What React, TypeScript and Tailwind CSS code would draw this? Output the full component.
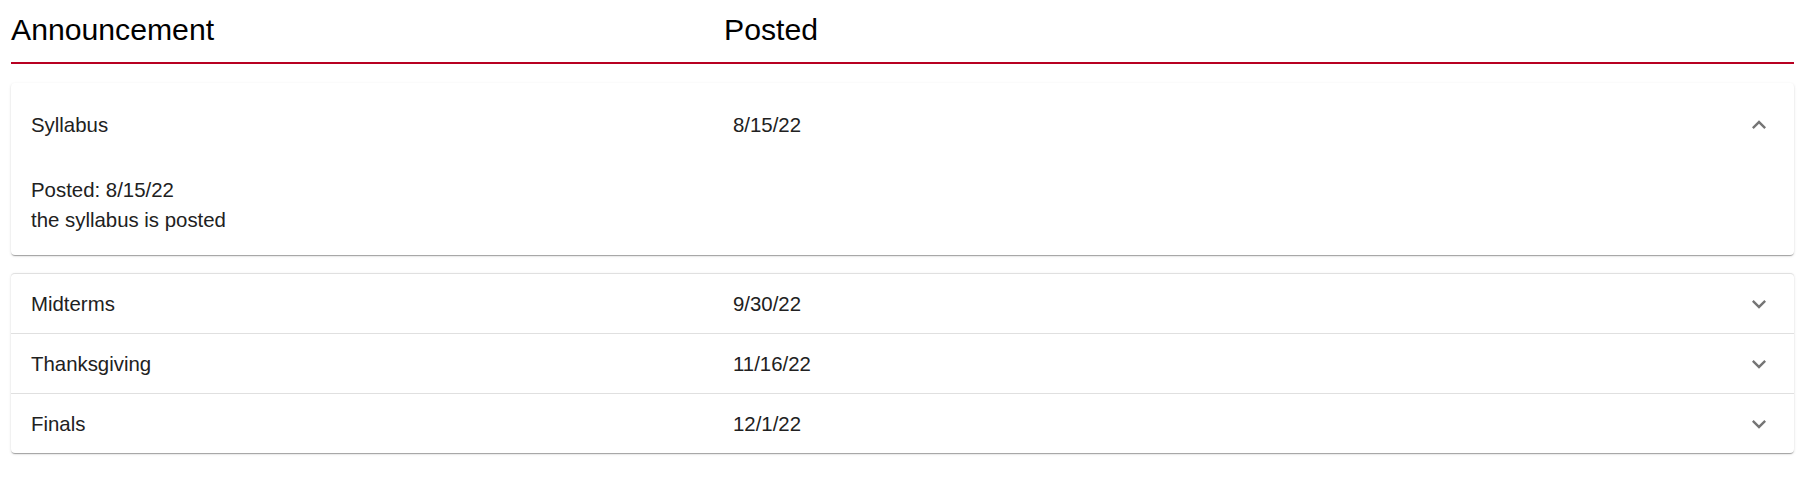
import { useState } from 'react';

type Announcement = {
  title: string;
  posted: string;
  body: string;
};

const announcements: Announcement[] = [
  { title: 'Syllabus', posted: '8/15/22', body: 'the syllabus is posted' },
  { title: 'Midterms', posted: '9/30/22', body: 'midterms are coming up' },
  { title: 'Thanksgiving', posted: '11/16/22', body: 'no class over the break' },
  { title: 'Finals', posted: '12/1/22', body: 'finals schedule is out' },
];

function ExpandIcon({ open }: { open: boolean }) {
  return (
    <svg
      viewBox="0 0 24 24"
      className={`w-[28px] h-[28px] fill-[#757575] ${open ? 'rotate-180' : ''}`}
    >
      <path d="M16.59 8.59 12 13.17 7.41 8.59 6 10l6 6 6-6z" />
    </svg>
  );
}

function Summary({
  item,
  open,
  onToggle,
  height,
  divider,
}: {
  item: Announcement;
  open: boolean;
  onToggle: () => void;
  height: string;
  divider?: boolean;
}) {
  return (
    <button
      onClick={onToggle}
      className={`w-full flex items-center pl-[20px] pr-[21px] text-left ${height} ${
        divider ? 'border-t border-[#e0e0e0]' : ''
      }`}
    >
      <span className="w-[702px] shrink-0">{item.title}</span>
      <span className="flex-1">{item.posted}</span>
      <ExpandIcon open={open} />
    </button>
  );
}

export default function App() {
  const [openIndex, setOpenIndex] = useState<number | null>(0);
  const toggle = (i: number) => setOpenIndex(openIndex === i ? null : i);

  const first = announcements[0];
  const rest = announcements.slice(1);

  return (
    <div className="bg-white min-h-[482px] font-['Liberation_Sans',Arial,sans-serif]">
      <div className="ml-[11px] w-[1783px]">
        {/* Column headings */}
        <div className="flex pt-[12px] pb-[14px] border-b-2 border-[#b80021] text-[30.2px] leading-[36px] text-black">
          <span className="w-[713px] shrink-0">Announcement</span>
          <span>Posted</span>
        </div>

        <div className="mt-[19px] text-[20.4px] leading-[30px] text-[#212121]">
          {/* Expanded card */}
          <div className="bg-white rounded-[4px] shadow-[0_2px_1px_-1px_rgba(0,0,0,0.2),0_1px_1px_0_rgba(0,0,0,0.14),0_1px_3px_0_rgba(0,0,0,0.12)]">
            <Summary
              item={first}
              open={openIndex === 0}
              onToggle={() => toggle(0)}
              height={openIndex === 0 ? 'h-[83px]' : 'h-[60px]'}
            />
            {openIndex === 0 && (
              <div className="px-[20px] pt-[9px] pb-[20px]">
                <p>Posted: {first.posted}</p>
                <p>{first.body}</p>
              </div>
            )}
          </div>

          {/* Remaining cards */}
          <div className="mt-[18px] bg-white rounded-[4px] border-t border-[#e0e0e0] shadow-[0_2px_1px_-1px_rgba(0,0,0,0.2),0_1px_1px_0_rgba(0,0,0,0.14),0_1px_3px_0_rgba(0,0,0,0.12)]">
            {rest.map((item, idx) => {
              const i = idx + 1;
              return (
                <div key={item.title}>
                  <Summary
                    item={item}
                    open={openIndex === i}
                    onToggle={() => toggle(i)}
                    height={idx === 0 ? 'h-[59px]' : 'h-[60px]'}
                    divider={idx > 0}
                  />
                  {openIndex === i && (
                    <div className="px-[20px] pt-[9px] pb-[20px]">
                      <p>Posted: {item.posted}</p>
                      <p>{item.body}</p>
                    </div>
                  )}
                </div>
              );
            })}
          </div>
        </div>
      </div>
    </div>
  );
}
